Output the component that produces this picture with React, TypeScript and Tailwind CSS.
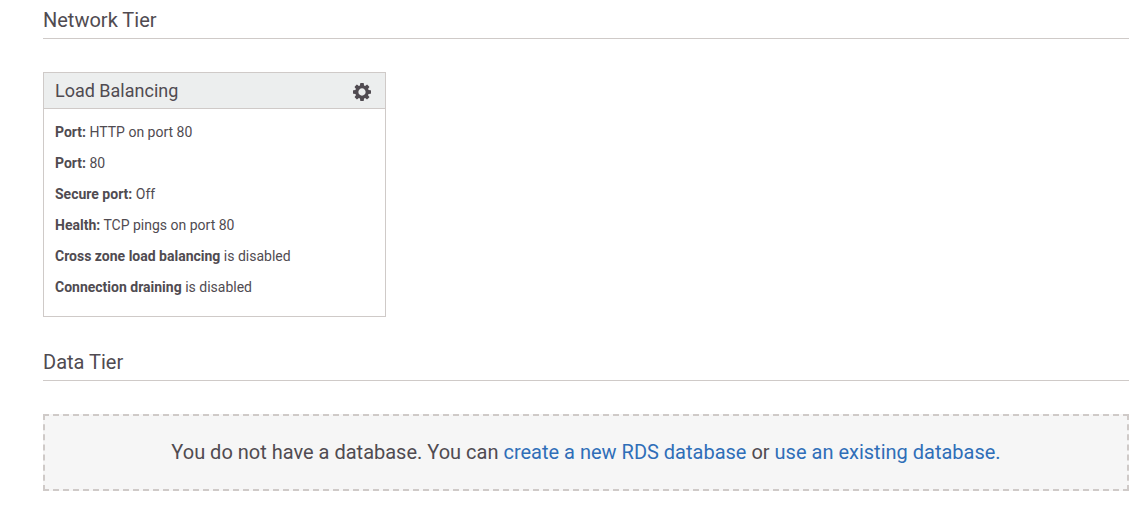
import type { ReactNode } from "react";

const details: { label: string; value: string }[] = [
  { label: "Port:", value: "HTTP on port 80" },
  { label: "Port:", value: "80" },
  { label: "Secure port:", value: "Off" },
  { label: "Health:", value: "TCP pings on port 80" },
  { label: "Cross zone load balancing", value: "is disabled" },
  { label: "Connection draining", value: "is disabled" },
];

function GearIcon() {
  return (
    <svg viewBox="0 128 1536 1536" className="size-[18px] fill-current" aria-hidden="true">
      <path d="M1078 896q0-128-91-219t-219-91-219 91-91 219 91 219 219 91 219-91 91-219zm458-109v222q0 12-8 23t-20 13l-185 28q-19 54-39 91 35 50 107 138 10 12 10 25t-9 23q-27 37-99 108t-94 71q-12 0-26-9l-138-108q-44 23-91 38-16 136-29 186-7 28-36 28h-222q-14 0-24.5-8.5t-11.5-21.5l-28-184q-49-16-90-37l-141 107q-10 9-25 9-14 0-25-11-126-114-165-168-7-10-7-23 0-12 8-23 15-21 51-66.5t54-70.5q-27-50-41-99l-183-27q-13-2-21-12.5t-8-23.5v-222q0-12 8-23t19-13l186-28q14-46 39-92-40-57-107-138-10-12-10-24 0-10 9-23 26-36 98.5-107.5t94.5-71.5q13 0 26 10l138 107q44-23 91-38 16-136 29-186 7-28 36-28h222q14 0 24.5 8.5t11.5 21.5l28 184q49 16 90 37l142-107q9-9 24-9 13 0 25 10 129 119 165 170 7 8 7 22 0 12-8 23-15 21-51 66.5t-54 70.5q26 50 41 98l183 28q13 2 21 12.5t8 23.5z" />
    </svg>
  );
}

function Tier({ title, children }: { title: string; children: ReactNode }) {
  return (
    <section>
      <h2 className="mb-[33px] border-b border-[#cfcac8] pb-1.5 text-xl leading-6">{title}</h2>
      {children}
    </section>
  );
}

export default function App() {
  return (
    <main className="flex flex-col gap-[33px] bg-white pt-2 pr-2.5 pb-6 pl-[43px] font-['Roboto',sans-serif] text-[#504b51]">
      <Tier title="Network Tier">
        <article className="w-full max-w-[343px] border border-[#cfcac8]">
          <header className="flex items-center justify-between border-b border-[#cfcac8] bg-[#eceeee] py-1.5 pr-3.5 pl-[11px]">
            <h3 className="text-lg leading-[23px]">Load Balancing</h3>
            <button type="button" aria-label="Load balancing settings" className="cursor-pointer pt-0.5">
              <GearIcon />
            </button>
          </header>
          <div className="flex flex-col gap-[11px] px-[11px] pt-[13px] pb-[19px] text-sm leading-5">
            {details.map(({ label, value }) => (
              <p key={label + value}>
                <strong className="font-bold">{label}</strong> {value}
              </p>
            ))}
          </div>
        </article>
      </Tier>
      <Tier title="Data Tier">
        <p className="border-2 border-dashed border-[#cfcac8] bg-[#f6f6f6] px-4 py-6 text-center text-xl leading-[25px]">
          You do not have a database. You can{" "}
          <a href="#create-database" className="text-[#2f6eb8]">create a new RDS database</a> or{" "}
          <a href="#existing-database" className="text-[#2f6eb8]">use an existing database.</a>
        </p>
      </Tier>
    </main>
  );
}
